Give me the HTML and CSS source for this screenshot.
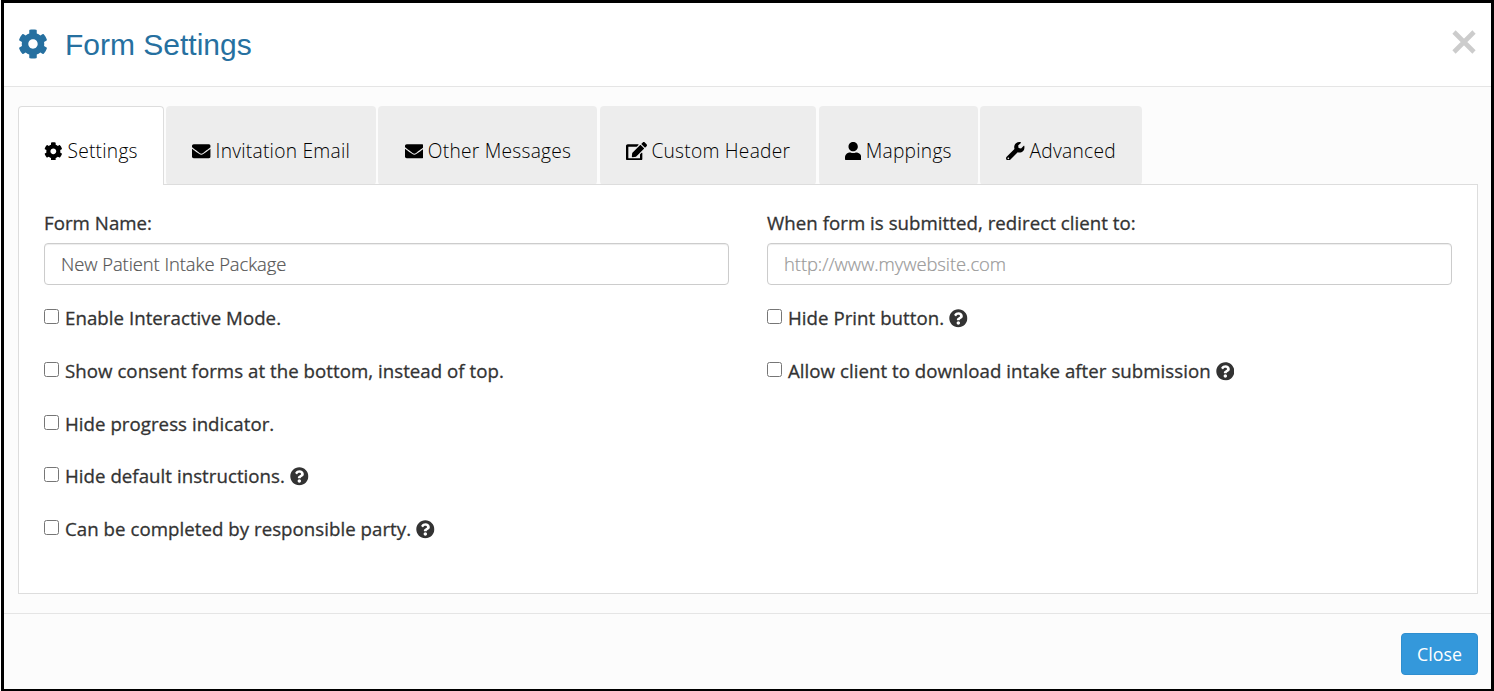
FILE: index.html
```
<!DOCTYPE html>
<html lang="en">
<head>
<meta charset="utf-8">
<title>Form Settings</title>
<link rel="stylesheet" href="styles.css">
</head>
<body>
<svg class="sprite" aria-hidden="true">
  <symbol id="cog" viewBox="0 0 512 512"><path d="M487.4 315.7l-42.6-24.6c4.3-23.2 4.3-47 0-70.2l42.6-24.6c4.9-2.8 7.1-8.6 5.5-14-11.1-35.6-30-67.8-54.7-94.6-3.8-4.1-10-5.1-14.8-2.3L380.8 110c-17.9-15.4-38.5-27.3-60.8-35.1V25.8c0-5.6-3.9-10.5-9.4-11.7-36.7-8.2-74.3-7.8-109.2 0-5.5 1.2-9.4 6.1-9.4 11.7V75c-22.2 7.9-42.8 19.8-60.8 35.1L88.7 85.5c-4.9-2.8-11-1.9-14.8 2.3-24.7 26.7-43.6 58.9-54.7 94.6-1.7 5.4.6 11.2 5.5 14L67.3 221c-4.3 23.2-4.3 47 0 70.2l-42.6 24.6c-4.9 2.8-7.1 8.6-5.5 14 11.1 35.6 30 67.8 54.7 94.6 3.8 4.1 10 5.1 14.8 2.3l42.6-24.6c17.9 15.4 38.5 27.3 60.8 35.1v49.2c0 5.6 3.9 10.5 9.4 11.7 36.7 8.2 74.3 7.8 109.2 0 5.5-1.2 9.4-6.1 9.4-11.7v-49.2c22.2-7.9 42.8-19.8 60.8-35.1l42.6 24.6c4.9 2.8 11 1.9 14.8-2.3 24.7-26.7 43.6-58.9 54.7-94.6 1.5-5.5-.7-11.3-5.6-14.1zM256 336c-44.1 0-80-35.9-80-80s35.9-80 80-80 80 35.9 80 80-35.9 80-80 80z"/></symbol>
  <symbol id="envelope" viewBox="0 0 512 512"><path d="M502.3 190.8c3.9-3.1 9.7-.2 9.7 4.7V400c0 26.5-21.5 48-48 48H48c-26.5 0-48-21.5-48-48V195.6c0-5 5.7-7.8 9.7-4.7 22.4 17.4 52.1 39.5 154.1 113.6 21.1 15.4 56.7 47.8 92.2 47.6 35.7.3 72-32.8 92.3-47.6 102-74.1 131.6-96.3 154-113.7zM256 320c23.2.4 56.6-29.2 73.4-41.4 132.7-96.3 142.8-104.7 173.4-128.7 5.8-4.5 9.2-11.5 9.2-18.9v-19c0-26.5-21.5-48-48-48H48c-26.5 0-48 21.5-48 48v19c0 7.4 3.4 14.3 9.2 18.9 30.6 23.9 40.7 32.4 173.4 128.7 16.8 12.2 50.2 41.8 73.4 41.4z"/></symbol>
  <symbol id="edit" viewBox="0 0 576 512"><path d="M402.6 83.2l90.2 90.2c3.8 3.8 3.8 10 0 13.8L274.4 405.6l-92.8 10.3c-12.4 1.4-22.9-9.1-21.5-21.5l10.3-92.8L388.8 83.2c3.8-3.8 10-3.8 13.8 0zm162-22.9l-48.8-48.8c-15.2-15.2-39.9-15.2-55.2 0l-35.4 35.4c-3.8 3.8-3.8 10 0 13.8l90.2 90.2c3.8 3.8 10 3.8 13.8 0l35.4-35.4c15.2-15.3 15.2-40 0-55.2zM384 346.2V448H64V128h229.8c3.2 0 6.2-1.3 8.5-3.5l40-40c7.6-7.6 2.2-20.5-8.5-20.5H48C21.5 64 0 85.5 0 112v352c0 26.5 21.5 48 48 48h352c26.5 0 48-21.5 48-48V306.2c0-10.7-12.9-16-20.5-8.5l-40 40c-2.2 2.3-3.5 5.3-3.5 8.5z"/></symbol>
  <symbol id="user" viewBox="0 0 448 512"><path d="M224 256c70.7 0 128-57.3 128-128S294.7 0 224 0 96 57.3 96 128s57.3 128 128 128zm89.6 32h-16.7c-22.2 10.2-46.9 16-72.9 16s-50.6-5.8-72.9-16h-16.7C60.2 288 0 348.2 0 422.4V464c0 26.5 21.5 48 48 48h352c26.5 0 48-21.5 48-48v-41.6c0-74.2-60.2-134.4-134.4-134.4z"/></symbol>
  <symbol id="wrench" viewBox="0 0 512 512"><path d="M507.73 109.1c-2.24-9.03-13.54-12.09-20.12-5.51l-74.36 74.36-67.88-11.31-11.31-67.88 74.36-74.36c6.62-6.62 3.43-17.9-5.66-20.16-47.38-11.74-99.55.91-136.58 37.93-39.64 39.64-50.55 97.1-34.05 147.2L18.74 402.76c-24.99 24.99-24.99 65.51 0 90.5 24.99 24.99 65.51 24.99 90.5 0l213.21-213.21c50.12 16.71 107.47 5.68 147.37-34.22 37.07-37.07 49.7-89.32 37.91-136.73zM64 472c-13.25 0-24-10.75-24-24 0-13.26 10.75-24 24-24s24 10.74 24 24c0 13.25-10.75 24-24 24z"/></symbol>
  <symbol id="help" viewBox="0 0 512 512"><path d="M504 256c0 136.997-111.043 248-248 248S8 392.997 8 256C8 119.083 119.043 8 256 8s248 111.083 248 248zM262.655 90c-54.497 0-89.255 22.957-116.549 63.758-3.536 5.286-2.353 12.415 2.715 16.258l34.699 26.31c5.205 3.947 12.621 3.008 16.665-2.122 17.864-22.658 30.113-35.797 57.303-35.797 20.429 0 45.698 13.148 45.698 32.958 0 14.976-12.363 22.667-32.534 33.976C247.128 238.528 216 254.941 216 296v4c0 6.627 5.373 12 12 12h56c6.627 0 12-5.373 12-12v-1.333c0-28.462 83.186-29.647 83.186-106.667 0-58.002-60.165-102-116.531-102zM256 338c-25.365 0-46 20.635-46 46 0 25.364 20.635 46 46 46s46-20.636 46-46c0-25.364-20.635-46-46-46z"/></symbol>
</svg>
<div class="modal">
  <header class="modal-header">
    <svg class="title-icon"><use href="#cog"/></svg>
    <h1 class="title">Form Settings</h1>
    <button class="dismiss" aria-label="Close dialog"><svg viewBox="0 0 24 24"><path d="M2 2L22 22M22 2L2 22"/></svg></button>
  </header>
  <main class="modal-body">
    <nav class="tabs">
      <a class="tab tab-active"><svg class="icon"><use href="#cog"/></svg><span>Settings</span></a>
      <a class="tab"><svg class="icon"><use href="#envelope"/></svg><span>Invitation Email</span></a>
      <a class="tab"><svg class="icon"><use href="#envelope"/></svg><span>Other Messages</span></a>
      <a class="tab"><svg class="icon icon-wide"><use href="#edit"/></svg><span>Custom Header</span></a>
      <a class="tab"><svg class="icon icon-narrow"><use href="#user"/></svg><span>Mappings</span></a>
      <a class="tab"><svg class="icon"><use href="#wrench"/></svg><span>Advanced</span></a>
    </nav>
    <section class="panel">
      <div class="column">
        <label class="field-label" for="form-name">Form Name:</label>
        <input class="field" id="form-name" type="text" value="New Patient Intake Package">
        <div class="options">
          <label class="option"><input class="check" type="checkbox"><span>Enable Interactive Mode.</span></label>
          <label class="option"><input class="check" type="checkbox"><span>Show consent forms at the bottom, instead of top.</span></label>
          <label class="option"><input class="check" type="checkbox"><span>Hide progress indicator.</span></label>
          <label class="option"><input class="check" type="checkbox"><span>Hide default instructions.</span><svg class="icon"><use href="#help"/></svg></label>
          <label class="option"><input class="check" type="checkbox"><span>Can be completed by responsible party.</span><svg class="icon"><use href="#help"/></svg></label>
        </div>
      </div>
      <div class="column">
        <label class="field-label" for="redirect">When form is submitted, redirect client to:</label>
        <input class="field" id="redirect" type="text" placeholder="http://www.mywebsite.com">
        <div class="options">
          <label class="option"><input class="check" type="checkbox"><span>Hide Print button.</span><svg class="icon"><use href="#help"/></svg></label>
          <label class="option"><input class="check" type="checkbox"><span>Allow client to download intake after submission</span><svg class="icon"><use href="#help"/></svg></label>
        </div>
      </div>
    </section>
  </main>
  <footer class="modal-footer"><button class="close-button">Close</button></footer>
</div>
</body>
</html>
```
FILE: styles.css
```
* { box-sizing: border-box; }

body {
  margin: 0;
  background: #fff;
  color: #333;
  font-family: "Open Sans", sans-serif;
  font-size: 18.67px;
  font-weight: 300;
  line-height: 26.67px;
}

.sprite { display: none; }

.modal {
  display: flex;
  flex-direction: column;
  height: 691px;
  margin-left: 1px;
  border: 3px solid #000;
  border-bottom-width: 2px;
  background: #fcfcfc;
}

.modal-header {
  display: flex;
  align-items: center;
  height: 84px;
  padding: 0 15px 0 14px;
  border-bottom: 1px solid #e5e5e5;
  background: #fff;
}

.title-icon {
  width: 30px;
  height: 30px;
  margin: -2px 17px 0 0;
  fill: #2670a0;
}

.title {
  flex: 1;
  margin: 0;
  color: #2670a0;
  font: 400 30px/34px "Liberation Sans", Arial, sans-serif;
}

.dismiss {
  width: 24px;
  height: 24px;
  margin-top: -6px;
  padding: 0;
  border: 0;
  background: none;
}

.dismiss svg {
  display: block;
  fill: none;
  stroke: #ccc;
  stroke-width: 4.6;
}

.modal-body {
  flex: 1;
  display: flex;
  flex-direction: column;
  padding: 19px 13px 19px 14px;
}

.tabs {
  display: flex;
  gap: 2.2px;
  height: 79px;
  margin-bottom: -1px;
}

.tab {
  display: flex;
  align-items: center;
  gap: 4.6px;
  padding: 11px 26.2px 0;
  border-radius: 4px;
  background: #ededed;
  color: #000;
  font-size: 19.2px;
  letter-spacing: 0.24px;
  white-space: nowrap;
}

.tab-active {
  position: relative;
  padding: 10px 25.2px 0;
  border: 1px solid #ddd;
  border-bottom: 0;
  border-radius: 4px 4px 0 0;
  background: #fff;
}

.icon {
  flex: none;
  width: 18.67px;
  height: 18.67px;
  fill: currentColor;
}

.icon-wide { width: 21px; }
.icon-narrow { width: 16.33px; }

.panel {
  flex: 1;
  display: grid;
  grid-template-columns: 1fr 1fr;
  gap: 38px;
  padding: 25px;
  border: 1px solid #ddd;
  background: #fff;
}

.column {
  display: flex;
  flex-direction: column;
}

.field-label,
.option {
  font-weight: 400;
  letter-spacing: 0.04px;
  -webkit-text-stroke: 0.3px #333;
}

.option .icon { stroke: none; }

.field-label { margin-bottom: 6.6px; }

.field {
  height: 42px;
  padding: 0 16px 1px;
  border: 1px solid #ccc;
  border-radius: 4px;
  background: #fff;
  box-shadow: inset 0 1px 1px rgba(0, 0, 0, 0.075);
  color: #555;
  font: 300 18.4px/26px "Open Sans", sans-serif;
  letter-spacing: -0.06px;
  -webkit-text-stroke: 0.2px;
}

.field::placeholder { color: #999; }

.options {
  display: flex;
  flex-direction: column;
  gap: 26px;
  margin-top: 20px;
}

.option {
  display: flex;
  align-items: center;
  gap: 5px;
}

.check {
  width: 15px;
  height: 15px;
  margin: -3.6px 1px 0 0;
}

.modal-footer {
  display: flex;
  align-items: flex-start;
  justify-content: flex-end;
  height: 76px;
  padding: 19px 13px;
  border-top: 1px solid #e5e5e5;
}

.close-button {
  width: 77px;
  height: 42px;
  padding: 0;
  border: 1px solid #2f8ecf;
  border-radius: 4px;
  background: #3498db;
  color: #fff;
  font: 400 17.8px/26px "Open Sans", sans-serif;
}
```
